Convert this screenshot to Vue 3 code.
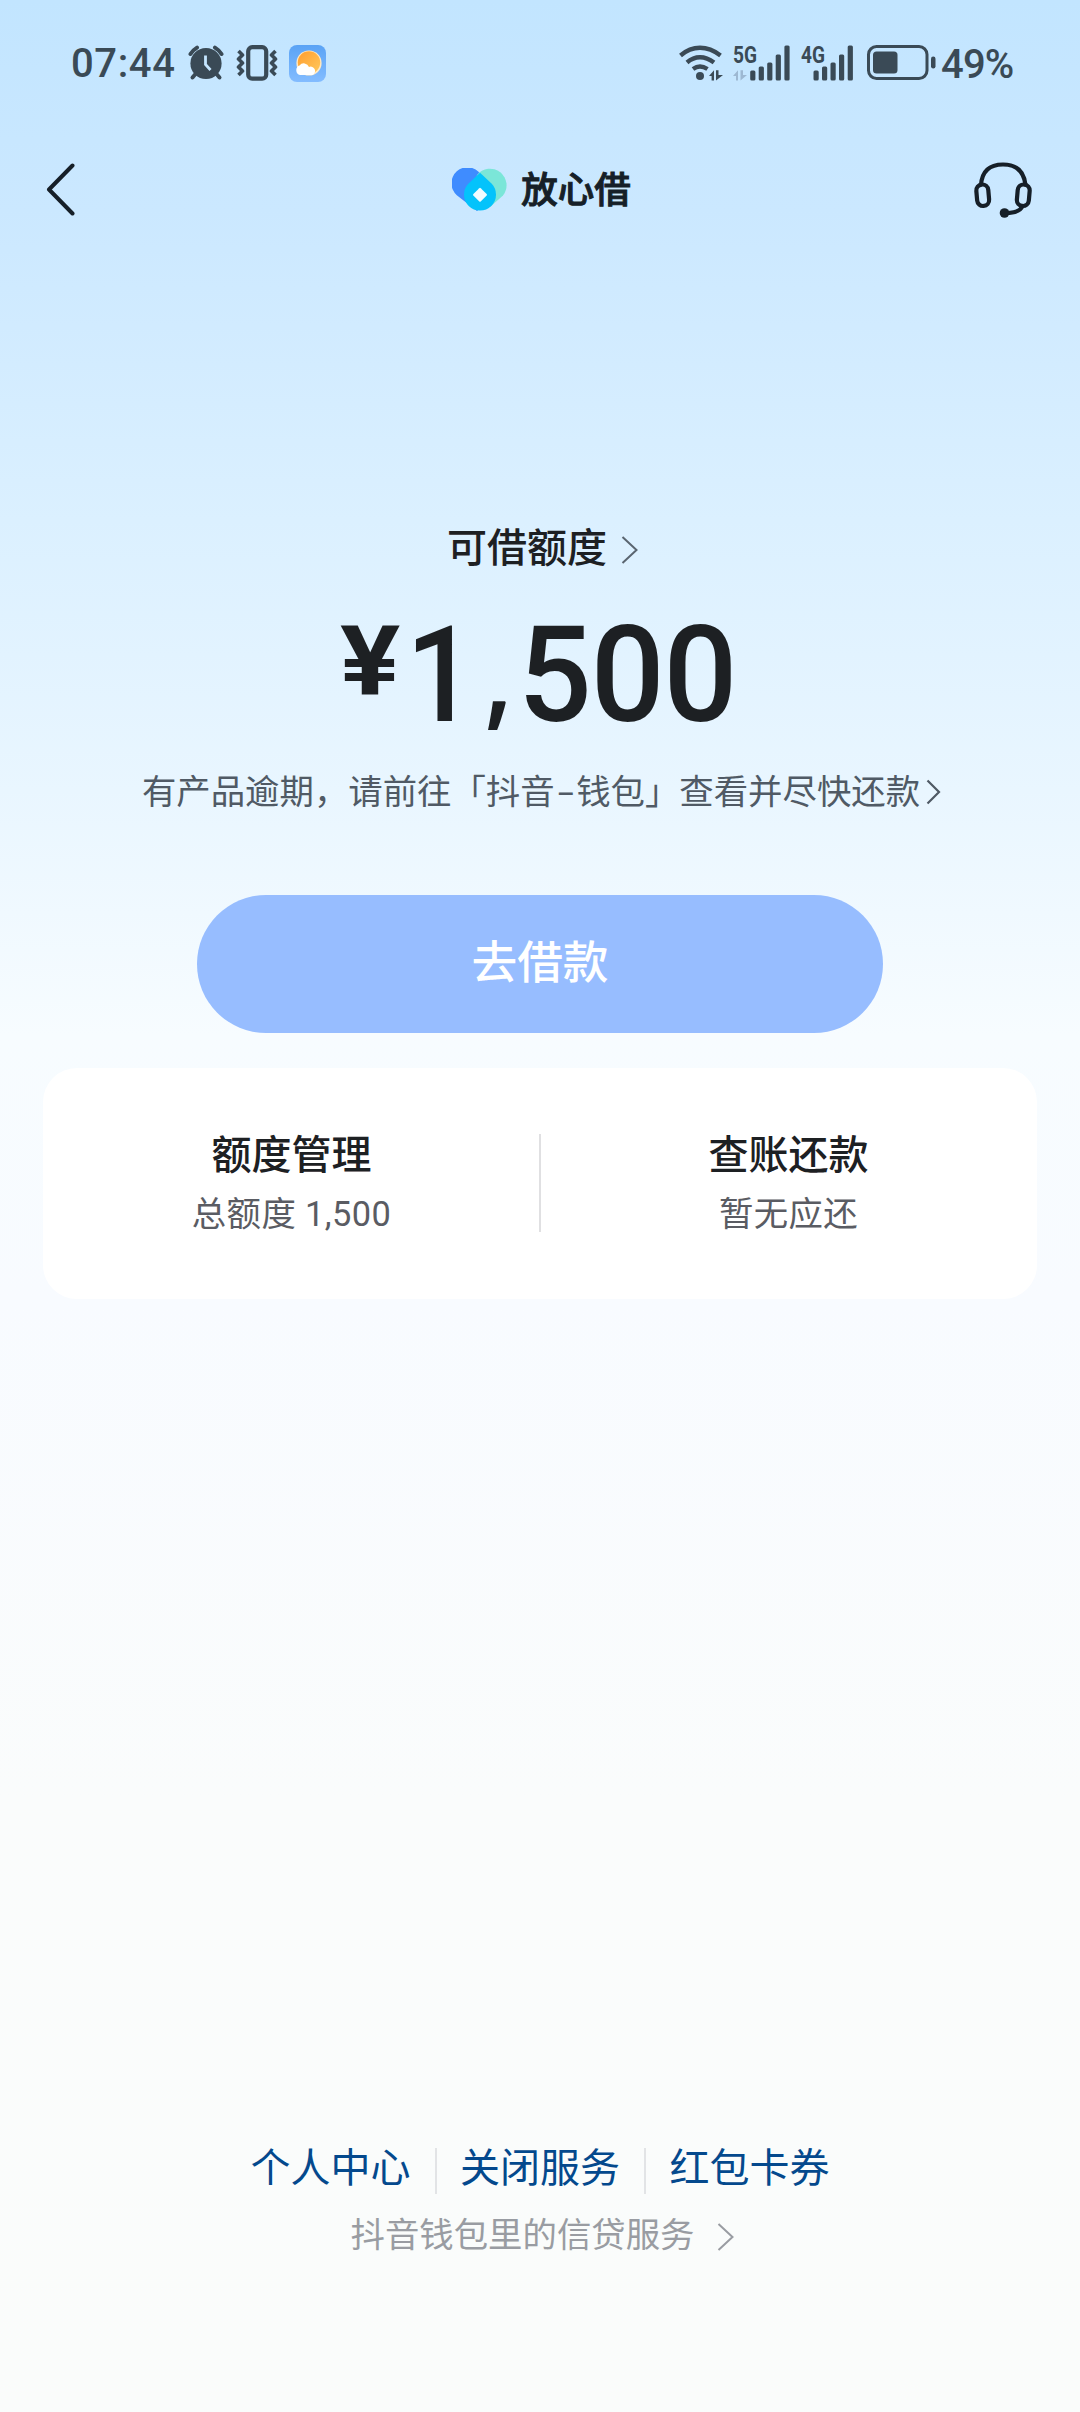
<script setup>
const stats = [
  { title: '额度管理', sub: '总额度 1,500' },
  { title: '查账还款', sub: '暂无应还' }
]
const links = ['个人中心', '关闭服务', '红包卡券']
const bars = [
  { x: 0, h: 10 },
  { x: 8.5, h: 14 },
  { x: 17, h: 18 },
  { x: 25.5, h: 26 },
  { x: 34.2, h: 35 }
]
</script>

<template>
  <div class="page">
    <header class="status">
      <span class="clock">07:44</span>
      <svg class="alarm" width="36" height="36" viewBox="0 0 36 36">
        <g fill="none" stroke="#3a4a56" stroke-linecap="round">
          <path d="M2.500 9A20 20 0 0 1 9 2.600M27 2.600A20 20 0 0 1 33.500 9" stroke-width="4" />
          <path d="M7.500 29L4.500 32.500M28.500 29L31.500 32.500" stroke-width="4" />
        </g>
        <circle cx="18" cy="18.500" r="15.600" fill="#3a4a56" />
        <path d="M17.500 10.500V19.500L22.500 25" fill="none" stroke="#c5e6ff" stroke-width="2.800" />
      </svg>
      <svg class="vibrate" width="42" height="36" viewBox="0 0 42 36" fill="none" stroke="#3a4a56">
        <rect x="12.200" y="2.200" width="18" height="31.500" rx="4" stroke-width="4.200" />
        <path d="M2.500 6L6.500 10L2.500 14L6.500 18L2.500 22L6.500 26L2.500 30M39.500 6L35.500 10L39.500 14L35.500 18L39.500 22L35.500 26L39.500 30" stroke-width="3.600" stroke-linejoin="round" />
      </svg>
      <svg class="weather" width="37" height="37" viewBox="0 0 37 37">
        <defs>
          <linearGradient id="sky" x1="0" y1="0" x2="0" y2="1">
            <stop offset="0" stop-color="#5aa3f5" /><stop offset="1" stop-color="#83bcff" />
          </linearGradient>
          <linearGradient id="sun" x1="0" y1="0" x2="1" y2="1">
            <stop offset="0" stop-color="#ff9d2e" /><stop offset="1" stop-color="#ffc95c" />
          </linearGradient>
        </defs>
        <rect width="37" height="37" rx="8" fill="url(#sky)" />
        <circle cx="20" cy="18" r="12.600" fill="#ffe9c4" />
        <circle cx="20" cy="17.500" r="11.200" fill="url(#sun)" />
        <path d="M11 30a5 5 0 0 1-.5-9.500a5.500 5.500 0 0 1 9.500 1.500a4.200 4.200 0 0 1 3.500 8z" fill="#fff" />
      </svg>
      <span class="grow"></span>
      <svg class="wifi" width="46" height="36" viewBox="0 0 46 36">
        <g fill="none" stroke="#3a4a56" stroke-width="4.400">
          <path d="M1.500 10.500Q10.500 2.800 21 2.800T41.500 10.500" />
          <path d="M8 17.500Q14 12.300 21 12.300T35 17.500" />
          <path d="M14 24Q17.500 21.500 21 21.500T28.500 24" />
        </g>
        <circle cx="21" cy="31" r="4" fill="#3a4a56" />
        <path d="M30 31L35 25.200V35.500H32.600V31zM37 25.200H39.500V30H44L37 35.500z" fill="#3a4a56" />
      </svg>
      <svg class="cell five" width="58" height="56" viewBox="0 -10 58 56">
        <text x="0" y="17.500" textLength="24" lengthAdjust="spacingAndGlyphs">5G</text>
        <path d="M0 31L5 25.200V35.500H3V31zM7.500 25.200H10V30H14L7.500 35.500z" fill="#9db8d2" />
        <rect v-for="b in bars" :key="b.x" :x="17.200 + b.x" :y="35.500 - b.h" width="5.200" :height="b.h" rx="1.500" />
      </svg>
      <svg class="cell four" width="54" height="56" viewBox="0 -10 54 56">
        <text x="0" y="17.500" textLength="24" lengthAdjust="spacingAndGlyphs">4G</text>
        <rect v-for="b in bars" :key="b.x" :x="12.500 + b.x" :y="35.500 - b.h" width="5.200" :height="b.h" rx="1.500" />
      </svg>
      <svg class="battery" width="70" height="36" viewBox="0 0 70 36">
        <rect x="1.500" y="1.500" width="58.500" height="32" rx="8" fill="none" stroke="#3a4a56" stroke-width="3" />
        <rect x="6" y="6.500" width="24.500" height="22" rx="3.500" fill="#3a4a56" />
        <rect x="64" y="11.500" width="4.500" height="12" rx="2.200" fill="#3a4a56" />
      </svg>
      <span class="percent">49%</span>
    </header>

    <nav class="nav">
      <svg class="back" width="30" height="54" viewBox="0 0 30 54" fill="none" stroke="#161f28" stroke-width="4" stroke-linecap="round" stroke-linejoin="round">
        <path d="M27.500 2.500L4 26.500L27.500 50.500" />
      </svg>
      <div class="brand">
        <svg width="56" height="44" viewBox="0 0 56 44">
          <path d="M4.800 27.200A16 16 0 1 1 28.500 6L45 27L25 43z" fill="#3f8cff" />
          <path d="M25 7A16 16 0 1 1 51 27.500L38 39L22 20z" fill="#7be6d8" />
          <path d="M16.500 15.500L28 4.800L39.500 15.500A16 16 0 1 1 16.500 15.500z" fill="#04c3fb" />
          <rect x="22.800" y="21.600" width="10.400" height="10.400" rx="1" transform="rotate(45 28 26.800)" fill="#f2fcff" />
        </svg>
        <span class="brand-name">放心借</span>
      </div>
      <svg class="headset" width="60" height="58" viewBox="0 0 60 58" fill="none" stroke="#161f28" stroke-width="4.200">
        <path d="M8 24C9 10 17 3.500 30 3.500S51 10 52.500 24" />
        <rect x="3.700" y="23.500" width="12" height="21.500" rx="6" transform="rotate(-5 9.700 34)" />
        <rect x="44.300" y="23.500" width="12" height="21.500" rx="6" transform="rotate(5 50.300 34)" />
        <path d="M49.500 45C47.500 50 42 52 33 52" />
        <circle cx="31.500" cy="52" r="4.800" fill="#161f28" stroke="none" />
      </svg>
    </nav>

    <main>
      <section class="hero">
        <div class="quota">
          <span>可借额度</span>
          <svg width="18" height="30" viewBox="0 0 18 30" fill="none" stroke="#5a6570" stroke-width="2"><path d="M1.500 2L15.500 15L1.500 28" /></svg>
        </div>
        <div class="amount"><span class="yen">¥</span><span class="one">1</span><span class="comma">,</span><span class="hundreds">500</span></div>
        <div class="notice">
          <span>有产品逾期，请前往「抖音<i class="dash">-</i>钱包」查看并尽快还款</span>
          <svg width="16" height="26" viewBox="0 0 16 26" fill="none" stroke="#505a65" stroke-width="2.200"><path d="M1.500 1.500L13 13L1.500 24.500" /></svg>
        </div>
        <button class="borrow">去借款</button>
      </section>

      <section class="card">
        <div v-for="s in stats" :key="s.title" class="stat">
          <div class="stat-title">{{ s.title }}</div>
          <div class="stat-sub">{{ s.sub }}</div>
        </div>
      </section>
    </main>

    <footer class="footer">
      <div class="links">
        <a v-for="l in links" :key="l">{{ l }}</a>
      </div>
      <div class="service">
        <span>抖音钱包里的信贷服务</span>
        <svg width="18" height="30" viewBox="0 0 18 30" fill="none" stroke="#999ca2" stroke-width="2"><path d="M1.500 2L15.500 15L1.500 28" /></svg>
      </div>
    </footer>
  </div>
</template>

<style>
body {
  margin: 0;
}
</style>

<style scoped>
.page {
  width: 1080px;
  height: 2412px;
  display: flex;
  flex-direction: column;
  overflow: hidden;
  font-family: Roboto, "Noto Sans CJK SC", sans-serif;
  color: #1d2023;
  background: linear-gradient(180deg, #c2e5ff 0, #cbe8ff 210px, #dbf0ff 520px, #e9f6ff 790px, #f7fcff 1035px, #f8fbff 1300px, #fafcfc 1800px, #fafcfb 2412px);
}
svg {
  display: block;
  flex: none;
}
.status {
  height: 126px;
  padding: 0 66px 0 71px;
  display: flex;
  align-items: center;
  color: #3a4a56;
  font-size: 40px;
  font-weight: 500;
  box-sizing: border-box;
}
.clock {
  width: 117px;
  padding-top: 2px;
  letter-spacing: 0.6px;
  line-height: 46px;
}
.vibrate {
  margin-left: 12px;
}
.weather {
  margin-left: 11px;
}
.grow {
  flex: 1;
}
.cell {
  fill: #3a4a56;
  font-size: 23px;
  font-weight: 700;
}
.five {
  margin-left: 8px;
}
.four {
  margin-left: 10px;
}
.battery {
  margin-left: 12px;
}
.percent {
  width: 73px;
  margin-left: 4px;
  padding-top: 2px;
  white-space: nowrap;
  letter-spacing: -0.8px;
}
.nav {
  height: 126px;
  padding: 2px 47px 0 45px;
  box-sizing: border-box;
  display: flex;
  align-items: center;
  justify-content: space-between;
}
.brand {
  display: flex;
  align-items: center;
  margin-left: 35px;
}
.brand-name {
  margin-left: 13px;
  padding-top: 2px;
  font-size: 36.500px;
  line-height: 44px;
  font-weight: 500;
  color: #161f28;
  -webkit-text-stroke: 1px #161f28;
  stroke-linejoin: round;
}
.hero {
  display: flex;
  flex-direction: column;
  align-items: center;
}
.quota {
  display: flex;
  align-items: center;
  height: 60px;
  margin-top: 267px;
  padding-left: 6px;
  gap: 14px;
  font-size: 40px;
  line-height: 56px;
  font-weight: 500;
}
.quota svg {
  margin-top: 2px;
}
.amount {
  height: 150px;
  margin-top: 22px;
  display: flex;
  align-items: flex-start;
  font-size: 134px;
  line-height: 150px;
  font-weight: 500;
  letter-spacing: -1.200px;
}
.amount span {
  display: block;
}
.amount .yen {
  font-size: 97px;
  line-height: 120px;
  font-weight: 700;
  transform: translateX(5px) scaleX(1.16);
  margin-right: 12px;
}
.amount .one {
  transform: scaleX(0.92);
  transform-origin: 80% 50%;
}
.amount .comma {
  width: 40px;
  text-align: center;
  font-family: "Noto Sans", sans-serif;
  font-size: 118px;
  font-weight: 600;
  transform: translate(2px, -6px) scaleX(0.85);
}
.amount .hundreds {
  transform: translateX(2px) scaleX(0.97);
  transform-origin: 0 50%;
}
.notice {
  display: flex;
  align-items: center;
  height: 50px;
  margin-top: 16px;
  padding-left: 4px;
  gap: 6px;
  font-size: 34.400px;
  line-height: 50px;
  color: #505a65;
  white-space: nowrap;
}
.dash {
  font-style: normal;
  display: inline-block;
  width: 21.500px;
  text-align: center;
  transform: scaleX(1.7);
}
.borrow {
  width: 686px;
  height: 138px;
  margin-top: 78px;
  padding: 0 0 10px;
  border: 0;
  border-radius: 69px;
  background: #97bdff;
  color: #fff;
  font-family: inherit;
  font-size: 45.700px;
  font-weight: 500;
}
.card {
  height: 231px;
  margin: 35px 43px 0;
  border-radius: 34px;
  background: #fff;
  display: flex;
}
.stat {
  flex: 1;
  padding-top: 60px;
  text-align: center;
  position: relative;
}
.stat + .stat::before {
  content: "";
  position: absolute;
  left: -1px;
  top: 66px;
  width: 2px;
  height: 98px;
  background: #e0e0e2;
}
.stat-title {
  font-size: 40px;
  line-height: 56px;
  font-weight: 500;
}
.stat-sub {
  margin-top: 5px;
  font-size: 34.400px;
  line-height: 50px;
  letter-spacing: 0.400px;
  color: #5a5c63;
}
.footer {
  margin-top: 840px;
  display: flex;
  flex-direction: column;
  align-items: center;
}
.links {
  display: flex;
  align-items: center;
  height: 60px;
  font-size: 40px;
  line-height: 56px;
  color: #04498d;
}
.links a + a {
  margin-left: 25px;
  padding-left: 24.500px;
  position: relative;
}
.links a + a::before {
  content: "";
  position: absolute;
  left: -1px;
  top: 7px;
  width: 2px;
  height: 46px;
  background: #e2e4e6;
}
.service {
  display: flex;
  align-items: center;
  height: 50px;
  margin-top: 11px;
  padding-left: 6px;
  gap: 23px;
  font-size: 34.400px;
  line-height: 50px;
  color: #999ca2;
}
.service svg {
  margin-top: 4px;
}
</style>
